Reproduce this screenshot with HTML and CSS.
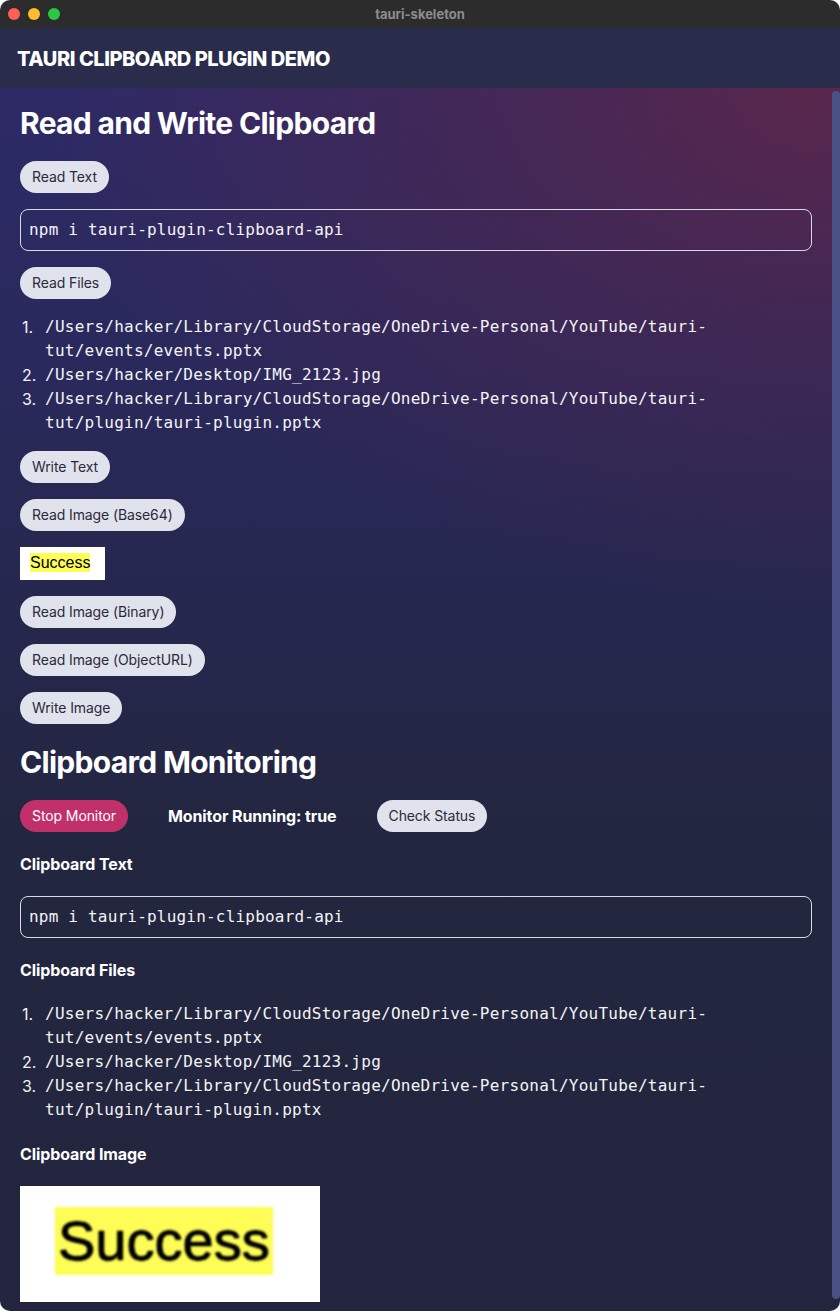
FILE: index.html
```html
<!DOCTYPE html>
<html lang="en">
<head>
<meta charset="utf-8">
<title>tauri-skeleton</title>
<link rel="stylesheet" href="styles.css">
</head>
<body>
<div class="window">
  <div class="titlebar">
    <div class="lights">
      <span class="light red"></span>
      <span class="light yellow"></span>
      <span class="light green"></span>
    </div>
    <div class="win-title">tauri-skeleton</div>
    <div></div>
  </div>
  <header class="appbar">
    <h1 class="app-title">TAURI CLIPBOARD PLUGIN DEMO</h1>
  </header>
  <div class="viewport">
    <main class="content">
      <h2 class="section-title">Read and Write Clipboard</h2>
      <button class="btn">Read Text</button>
      <div class="field">npm i tauri-plugin-clipboard-api</div>
      <button class="btn">Read Files</button>
      <ol class="files">
        <li>/Users/hacker/Library/CloudStorage/OneDrive-Personal/YouTube/tauri-tut/events/events.pptx</li>
        <li>/Users/hacker/Desktop/IMG_2123.jpg</li>
        <li>/Users/hacker/Library/CloudStorage/OneDrive-Personal/YouTube/tauri-tut/plugin/tauri-plugin.pptx</li>
      </ol>
      <button class="btn">Write Text</button>
      <button class="btn">Read Image (Base64)</button>
      <div class="shot shot-small"><span class="shot-text">Success</span></div>
      <button class="btn">Read Image (Binary)</button>
      <button class="btn">Read Image (ObjectURL)</button>
      <button class="btn">Write Image</button>

      <h2 class="section-title">Clipboard Monitoring</h2>
      <div class="monitor-row">
        <button class="btn btn-danger">Stop Monitor</button>
        <span class="status">Monitor Running: true</span>
        <button class="btn">Check Status</button>
      </div>
      <h3 class="label">Clipboard Text</h3>
      <div class="field">npm i tauri-plugin-clipboard-api</div>
      <h3 class="label">Clipboard Files</h3>
      <ol class="files">
        <li>/Users/hacker/Library/CloudStorage/OneDrive-Personal/YouTube/tauri-tut/events/events.pptx</li>
        <li>/Users/hacker/Desktop/IMG_2123.jpg</li>
        <li>/Users/hacker/Library/CloudStorage/OneDrive-Personal/YouTube/tauri-tut/plugin/tauri-plugin.pptx</li>
      </ol>
      <h3 class="label">Clipboard Image</h3>
      <div class="shot shot-large"><span class="shot-text">Success</span></div>
    </main>
    <div class="scrollbar"><div class="thumb"></div></div>
  </div>
</div>
</body>
</html>
```

FILE: styles.css
```css
html, body {
  margin: 0;
  padding: 0;
  background: #ffffff;
}

.window {
  width: 840px;
  height: 1311px;
  border-radius: 10px;
  overflow: hidden;
  display: flex;
  flex-direction: column;
  font-family: Inter, "Noto Sans", sans-serif;
  color: #ffffff;
}

.titlebar {
  height: 28px;
  flex: none;
  background: #2c2c2c;
  display: grid;
  grid-template-columns: 1fr auto 1fr;
  align-items: center;
}

.lights {
  display: flex;
  gap: 8px;
  padding-left: 8px;
}

.light {
  width: 12px;
  height: 12px;
  border-radius: 50%;
  display: block;
}

.red { background: #fe5f57; }
.yellow { background: #febc2e; }
.green { background: #2ac840; }

.win-title {
  font-size: 13px;
  font-weight: 700;
  color: #8c8c8c;
}

.appbar {
  height: 60px;
  flex: none;
  background: #292c4b;
  display: flex;
  align-items: center;
  padding-left: 17px;
}

.app-title {
  margin: 0;
  font-size: 20px;
  font-weight: 800;
  letter-spacing: -0.45px;
  line-height: 24px;
  padding-top: 2px;
}

.viewport {
  flex: 1;
  display: flex;
  min-height: 0;
  background:
    radial-gradient(ellipse 95% 42% at 100% 0%, rgba(92, 38, 74, 0.95) 0%, rgba(88, 38, 74, 0.5) 45%, rgba(88, 38, 74, 0) 100%),
    linear-gradient(180deg, #2d2a66 0%, #2a295d 20%, #26274f 42%, #23263f 62%, #22253d 100%);
}

.content {
  flex: 1;
  min-width: 0;
  overflow: hidden;
  padding: 13px 20px 0 20px;
  display: flex;
  flex-direction: column;
  align-items: flex-start;
  gap: 16px;
}

.section-title {
  margin: 0;
  font-size: 30px;
  font-weight: 700;
  line-height: 44px;
  letter-spacing: -0.7px;
}

.btn {
  font-family: Inter, "Noto Sans", sans-serif;
  font-size: 14px;
  line-height: 20px;
  letter-spacing: -0.1px;
  padding: 6px 12px;
  border: none;
  border-radius: 9999px;
  background: #e0e2ec;
  color: #2a2a3c;
  cursor: pointer;
}

.btn-danger {
  background: #c2306a;
  color: #ffffff;
}

.field {
  align-self: stretch;
  border: 1px solid #d9d9e2;
  border-radius: 8px;
  padding: 8px;
  font-family: "DejaVu Sans Mono", "Liberation Mono", monospace;
  font-size: 16px;
  letter-spacing: 0.2px;
  line-height: 24px;
  color: #f4f4f6;
}

.files {
  margin: 0;
  padding: 0;
  list-style: none;
  counter-reset: file;
  font-family: "DejaVu Sans Mono", "Liberation Mono", monospace;
  font-size: 16px;
  letter-spacing: 0.25px;
  line-height: 24px;
  color: #f4f4f6;
}

.files li {
  counter-increment: file;
  display: grid;
  grid-template-columns: 25px 1fr;
}

.files li::before {
  content: counter(file) ".";
  font-family: Inter, "Noto Sans", sans-serif;
  letter-spacing: 0;
  padding-left: 2px;
}

.shot {
  background: #ffffff;
  box-sizing: border-box;
  font-family: "Liberation Sans", Arial, sans-serif;
  color: #000000;
}

.shot-small {
  width: 85px;
  height: 33px;
  padding: 6px 0 0 10px;
}

.shot-small .shot-text {
  display: inline-block;
  background: #fdfd55;
  font-size: 16px;
  line-height: 19px;
}

.shot-large {
  width: 300px;
  height: 116px;
  padding: 21px 0 0 35px;
}

.shot-large .shot-text {
  display: inline-block;
  background: #fdfd55;
  font-size: 56px;
  line-height: 68px;
  padding: 0 3px;
  text-shadow: 0 0 1px #000, 0 0 1px #000, 0 0 1px #000;
  filter: blur(1.1px);
}

.monitor-row {
  display: flex;
  align-items: center;
  gap: 40px;
}

.status {
  font-size: 16px;
  font-weight: 700;
  letter-spacing: -0.1px;
}

.label {
  margin: 0;
  font-size: 16px;
  font-weight: 700;
  line-height: 32px;
  letter-spacing: -0.1px;
}

.scrollbar {
  width: 8px;
  flex: none;
  padding-top: 3px;
  padding-bottom: 12px;
  box-sizing: border-box;
  display: flex;
}

.thumb {
  flex: 1;
  background: #4a5186;
  border-radius: 4px;
}
```
